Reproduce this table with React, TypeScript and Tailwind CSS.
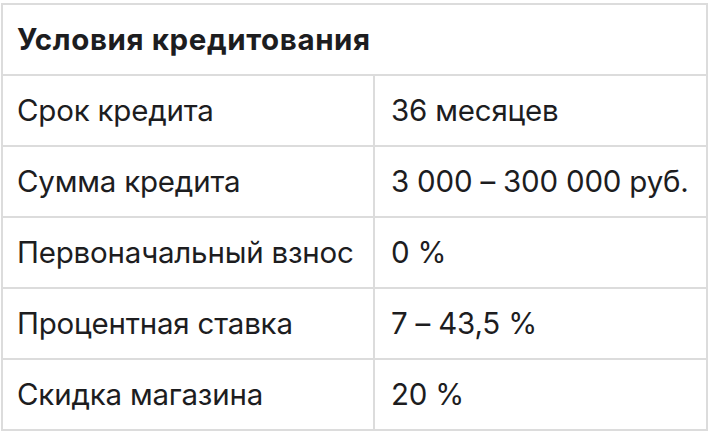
const rows: [string, string][] = [
  ["Срок кредита", "36 месяцев"],
  ["Сумма кредита", "3 000 – 300 000 руб."],
  ["Первоначальный взнос", "0 %"],
  ["Процентная ставка", "7 – 43,5 %"],
  ["Скидка магазина", "20 %"],
];

export default function App() {
  return (
    <div className="min-h-screen bg-white pt-[3px] pl-[1px] font-['Inter',sans-serif] text-[#1d1d1f]">
      <table className="w-[707px] border-collapse text-[29.5px] tracking-[-0.2px]">
        <thead>
          <tr>
            <th
              colSpan={2}
              className="h-[71px] border-2 border-[#dcdcdc] px-[14px] text-left font-bold tracking-[0.6px]"
            >
              Условия кредитования
            </th>
          </tr>
        </thead>
        <tbody>
          {rows.map(([label, value]) => (
            <tr key={label}>
              <td className="h-[71px] w-[372px] border-2 border-[#dcdcdc] pl-[14px] pr-0 whitespace-nowrap">{label}</td>
              <td className="h-[71px] border-2 border-[#dcdcdc] px-[16px] whitespace-nowrap">{value}</td>
            </tr>
          ))}
        </tbody>
      </table>
    </div>
  );
}
